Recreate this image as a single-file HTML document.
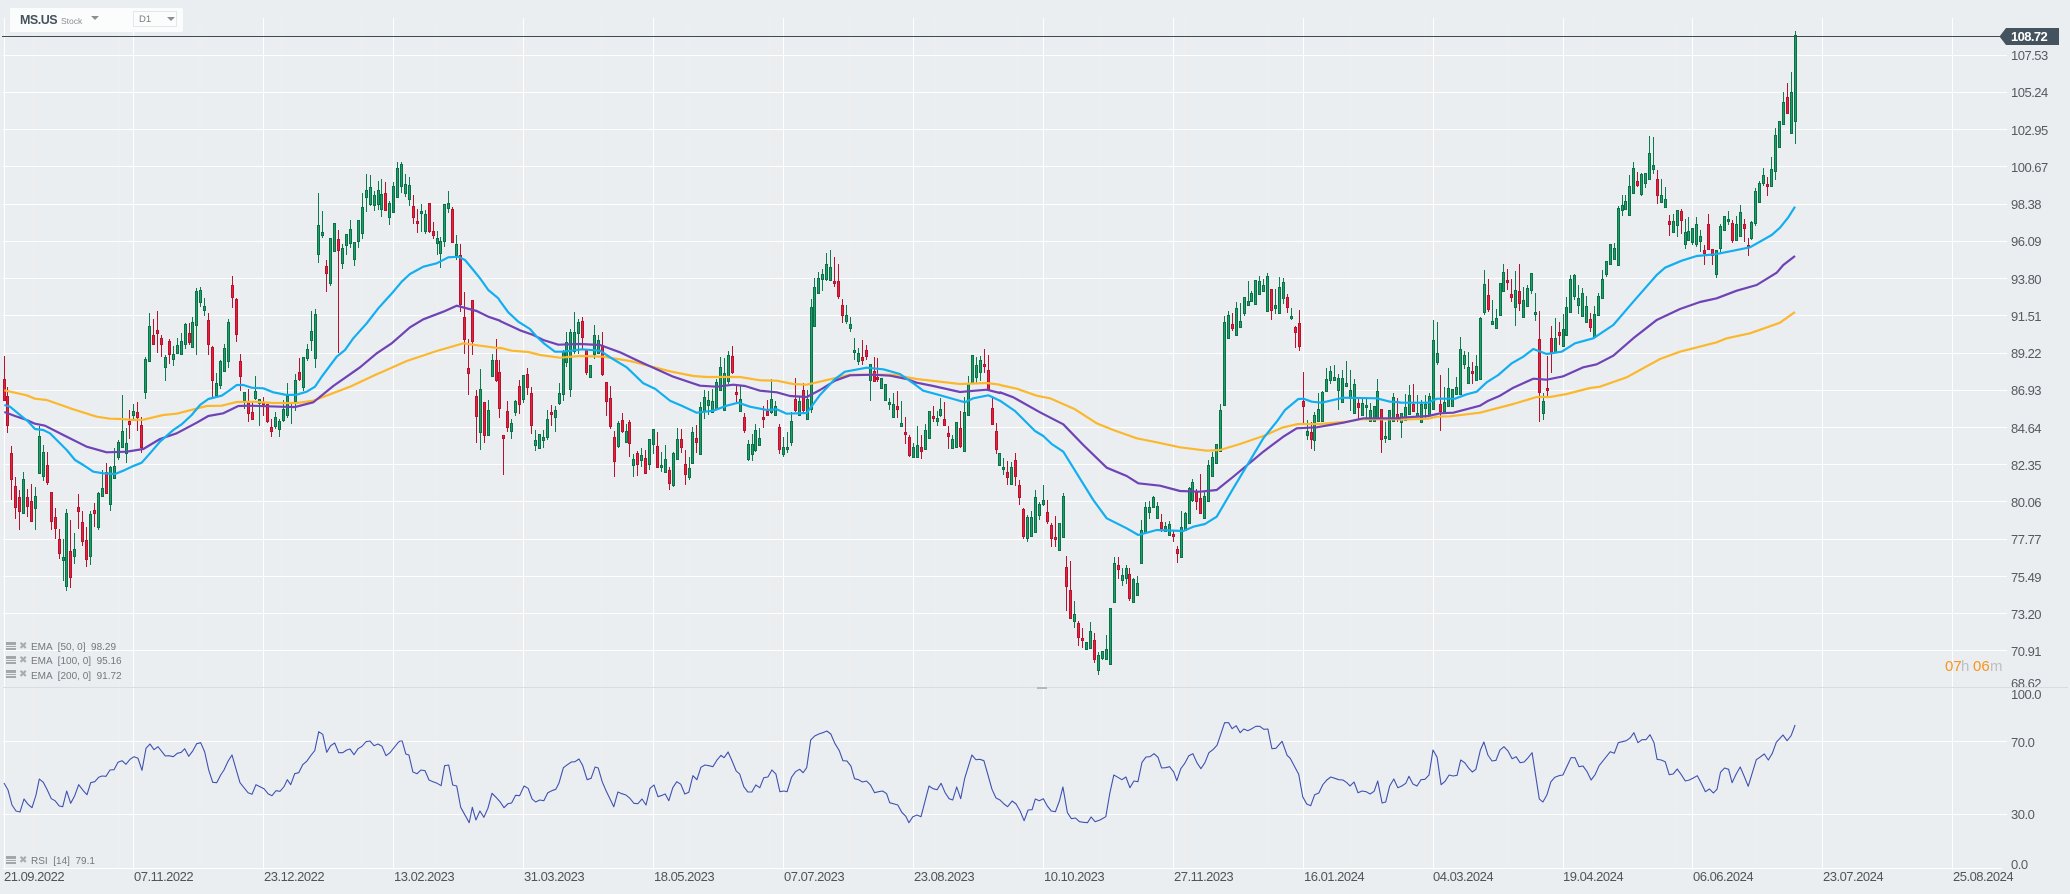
<!DOCTYPE html>
<html>
<head>
<meta charset="utf-8">
<title>MS.US</title>
<style>
html,body{margin:0;padding:0;background:#ebeef1;}
#r{position:relative;width:2070px;height:894px;overflow:hidden;background:#ebeef1;font-family:"Liberation Sans",sans-serif;}
svg{position:absolute;left:0;top:0;}
.p{position:absolute;left:2011px;height:16px;line-height:16px;font-size:13px;letter-spacing:-.5px;color:#555a5f;white-space:pre;}
.d{position:absolute;top:869px;height:16px;line-height:16px;font-size:13px;letter-spacing:-.5px;color:#4f5458;white-space:pre;}
.l{position:absolute;left:31px;height:14px;line-height:14px;font-size:10px;color:#73787c;white-space:pre;}
.x{position:absolute;left:19px;height:14px;line-height:14px;font-size:10px;color:#a9acaf;font-family:"DejaVu Sans",sans-serif;}
.t{position:absolute;top:659px;height:16px;line-height:16px;font-size:15px;}
#h{position:absolute;left:10px;top:8px;width:173px;height:24px;background:#fbfcfc;border-radius:2px;}
#h div{position:absolute;white-space:pre;}
.c{width:0;height:0;border-left:4px solid transparent;border-right:4px solid transparent;border-top:4px solid #8a8f93;}
</style>
</head>
<body>
<div id="r">
<svg width="2070" height="894" viewBox="0 0 2070 894">
<path fill="none" stroke="#f0eeee" stroke-width="1.5" d="M34 18V868M118.500 18V868M200 18V868M282 18V868M362 18V868M437 18V868M520 18V868M602 18V868M688 18V868M770 18V868M850 18V868M935 18V868M1018 18V868M1100 18V868M1185 18V868M1267 18V868M1350 18V868M1425 18V868M1507 18V868M1593 18V868M1675 18V868M1755 18V868"/>
<path fill="none" stroke="#fff" stroke-width="1" d="M3 55.500H2007M3 92.500H2007M3 129.500H2007M3 166.500H2007M3 204.500H2007M3 241.500H2007M3 278.500H2007M3 315.500H2007M3 353.500H2007M3 390.500H2007M3 427.500H2007M3 464.500H2007M3 501.500H2007M3 539.500H2007M3 576.500H2007M3 613.500H2007M3 650.500H2007M3 741.500H2007M3 814.500H2007M3 868.500H2002M4.500 18V870M133.500 18V870M263.500 18V870M393.500 18V870M523.500 18V870M653.500 18V870M783.500 18V870M913.500 18V870M1043.500 18V870M1173.500 18V870M1303.500 18V870M1433.500 18V870M1563.500 18V870M1692.500 18V870M1822.500 18V870M1952.500 18V870"/>
<path fill="none" stroke="#d9dde1" stroke-width="1" d="M3 687.500H2068"/>
<rect x="1037" y="687" width="10" height="2" fill="#b4b8bb"/>
<path id="gw" fill="none" stroke="#0e7a50" stroke-width="1"/>
<path id="rw" fill="none" stroke="#b5132f" stroke-width="1"/>
<path id="gb" fill="none" stroke="#0c7049" stroke-width="3"/>
<path id="gi" fill="none" stroke="#1ba068" stroke-width="1"/>
<path id="rb" fill="none" stroke="#b5132f" stroke-width="3"/>
<path id="ri" fill="none" stroke="#ea2038" stroke-width="1"/>
<path id="e200" fill="none" stroke="#fbb72d" stroke-width="2.200" stroke-linejoin="round"/>
<path id="e100" fill="none" stroke="#6f42b5" stroke-width="2.200" stroke-linejoin="round"/>
<path id="e50" fill="none" stroke="#12aef0" stroke-width="2.200" stroke-linejoin="round"/>
<path id="rsi" fill="none" stroke="#3f51b0" stroke-width="1.100" stroke-linejoin="round"/>
<path fill="none" stroke="#3d4b55" stroke-width="1" d="M2 36.500H2002"/>
<path fill="#44535e" d="M1999.500 36.500L2006 28H2059V45H2006Z"/>
<path fill="#a4a7aa" d="M6 642h10v3H6zM6 646h10v1H6zM6 648h10v2H6zM6 656h10v3H6zM6 660h10v1H6zM6 662h10v2H6zM6 670h10v3H6zM6 674h10v1H6zM6 676h10v2H6zM6 856h10v3H6zM6 860h10v1H6zM6 862h10v2H6z"/>
</svg>

<div id="h">
<div style="left:10px;top:4px;line-height:16px;font-size:12.500px;font-weight:bold;letter-spacing:-.5px;color:#46535e;">MS.US</div>
<div style="left:51px;top:6px;line-height:14px;font-size:8.500px;color:#8b9094;">Stock</div>
<div class="c" style="left:81px;top:8px;"></div>
<div style="left:123px;top:3px;width:42px;height:14px;border:1px solid #e4e7ea;"></div>
<div style="left:129px;top:4px;line-height:15px;font-size:9.500px;color:#777c80;">D1</div>
<div class="c" style="left:157px;top:9px;"></div>
</div>

<div class="p" style="top:29px;left:2011px;color:#fff;font-weight:bold;letter-spacing:-.6px;">108.72</div>
<div class="p" style="top:48px">107.53</div>
<div class="p" style="top:85px">105.24</div>
<div class="p" style="top:123px">102.95</div>
<div class="p" style="top:160px">100.67</div>
<div class="p" style="top:197px">98.38</div>
<div class="p" style="top:234px">96.09</div>
<div class="p" style="top:272px">93.80</div>
<div class="p" style="top:309px">91.51</div>
<div class="p" style="top:346px">89.22</div>
<div class="p" style="top:383px">86.93</div>
<div class="p" style="top:421px">84.64</div>
<div class="p" style="top:458px">82.35</div>
<div class="p" style="top:495px">80.06</div>
<div class="p" style="top:532px">77.77</div>
<div class="p" style="top:570px">75.49</div>
<div class="p" style="top:607px">73.20</div>
<div class="p" style="top:644px">70.91</div>
<div class="p" style="top:676px;height:11px;overflow:hidden;">68.62</div>
<div class="p" style="top:687px">100.0</div>
<div class="p" style="top:735px">70.0</div>
<div class="p" style="top:807px">30.0</div>
<div class="p" style="top:857px">0.0</div>

<div class="d" style="left:4px">21.09.2022</div>
<div class="d" style="left:134px">07.11.2022</div>
<div class="d" style="left:264px">23.12.2022</div>
<div class="d" style="left:394px">13.02.2023</div>
<div class="d" style="left:524px">31.03.2023</div>
<div class="d" style="left:654px">18.05.2023</div>
<div class="d" style="left:784px">07.07.2023</div>
<div class="d" style="left:914px">23.08.2023</div>
<div class="d" style="left:1044px">10.10.2023</div>
<div class="d" style="left:1174px">27.11.2023</div>
<div class="d" style="left:1304px">16.01.2024</div>
<div class="d" style="left:1433px">04.03.2024</div>
<div class="d" style="left:1563px">19.04.2024</div>
<div class="d" style="left:1693px">06.06.2024</div>
<div class="d" style="left:1823px">23.07.2024</div>
<div class="d" style="left:1953px">25.08.2024</div>

<div class="x" style="top:640px">✖</div><div class="l" style="top:641px">EMA  [50, 0]  98.29</div>
<div class="x" style="top:654px">✖</div><div class="l" style="top:655px">EMA  [100, 0]  95.16</div>
<div class="x" style="top:668px">✖</div><div class="l" style="top:670px">EMA  [200, 0]  91.72</div>
<div class="x" style="top:854px">✖</div><div class="l" style="top:855px">RSI  [14]  79.1</div>

<div class="t" style="left:1945px;color:#f7941d">07</div>
<div class="t" style="left:1961px;color:#bdbfc1">h</div>
<div class="t" style="left:1973px;color:#f7941d">06</div>
<div class="t" style="left:1990px;color:#bdbfc1">m</div>
</div>

<script>
var P={gw:'',rw:'',gb:'',gi:'',rb:'',ri:''};
function C(ox,oy,s){
 s.trim().split(/\s*,\s*/).forEach(function(e){
  if(!e)return;
  var c=e[0],a=e.slice(1).trim().split(/\s+/).map(Number);
  var x=Math.floor(ox+a[0]/3)+.5;
  var h=Math.round(oy+a[1]/3),t=Math.round(oy+a[2]/3),b=Math.round(oy+a[3]/3),l=Math.round(oy+a[4]/3);
  if(b-t<2)b=t+2;
  P[c+'w']+='M'+x+' '+h+'V'+l;
  P[c+'b']+='M'+x+' '+t+'V'+b;
  P[c+'i']+='M'+x+' '+(t+1)+'V'+(b-1);
 });
}
C(0,280,`r13 228 297 362 362,r22 322 348 437 459,r34 498 519 599 660,r46 591 618 684 717,r58 630 652 695 750,g70 576 597 701 701,r82 628 652 681 710,r94 612 663 725 725,g106 621 648 686 750,g118 438 468 581 581,g130 495 516 590 603,r142 516 555 609 615,r154 636 636 725 750,r166 684 711 746 777,r178 747 777 822 837,g190 777 831 843 903,g199 687 699 921 933,r211 720 813 893 924,g223 759 807 831 852,r235 642 681 696 747,r247 693 726 786 798,r259 741 780 840 861,g271 693 702 831 855,r283 669 690 702 741,g295 636 639 744 750,g307 570 624 651 651,r319 549 576 642 642,g331 558 561 675 693,g343 504 558 597 597,g355 480 486 534 540,g367 345 453 504 504,g379 444 489 522 549,r388 390 423 435 477,g400 372 393 408 420,r412 366 396 414 453,r424 411 435 504 519,g436 231 237 339 357,g448 99 138 246 246,r460 117 165 195 195,r472 93 150 162 219,r484 165 174 195 231,g496 225 231 264 303,r508 177 183 225 252,g520 198 222 240 258,g532 174 195 222 222,g544 159 183 225 225,g556 129 132 195 207,r568 129 159 189 195,g577 111 126 204 204,g589 24 33 138 225,g601 21 30 69 81,g613 54 78 93 108,r625 99 120 195 225,r637 198 201 303 351,g649 279 309 348 348,g661 240 243 318 327,g673 192 204 276 276,g685 117 126 246 264,r697 -12 15 54 84,r709 54 57 165 186,r721 222 243 291 333,g733 336 336 363 387,r745 327 363 402 426,r757 366 396 420 420,g766 288 333 357 360,g778 357 357 372 438,r790 351 366 375 408,r802 372 372 426 429,r814 417 441 456 471,g826 396 411 441 447,g838 417 423 450 471,g850 360 387 423 426,g862 309 348 408 414,g874 372 378 381 432,g886 282 300 366 393,r898 234 276 300 303,g910 231 231 324 333,g922 192 207 237 243,g934 93 153 183 213,g946 87 102 237 264`);
C(0,280,`r1405 177 264 282 345,r1417 60 60 186 225,r1429 330 348 411 489,g1441 267 327 459 510,r1453 366 366 468 489,g1465 360 390 468 468,g1477 222 240 291 291,r1489 177 240 303 306`);
C(290,150,`g85 129 225 315 339,g97 183 246 258 264,r109 330 348 372 426,g121 264 264 402 408,g133 219 219 306 306,r145 240 267 303 609,g157 282 294 342 357,g169 252 252 288 315,g181 210 237 282 294,g193 276 276 330 348,g205 210 210 276 294,g217 129 171 252 267,g229 72 120 144 186,g241 75 111 165 168,g253 123 135 168 183,g265 93 120 165 180,g274 87 132 180 201,r286 96 129 183 183,g298 153 159 204 225,g310 96 108 189 189,g322 36 54 144 144,g334 36 42 111 129,g346 72 102 132 141,g358 81 105 150 168,r370 135 168 204 222,r382 177 213 222 249,g394 162 183 192 246,g406 180 192 246 252,r418 159 159 246 249,r430 216 243 258 267,g442 243 264 282 315,g451 261 273 312 354,g463 162 162 276 291,g475 123 159 177 189,r487 171 177 279 279,g499 255 282 318 330,r511 282 315 465 486,r523 426 501 570 612`);
C(500,150,`r-2 630 666 777 803,r10 855 855 867 975,r22 753 783 834 846,g34 807 819 846 867,g46 750 753 789 798,r58 690 708 765 792,g70 675 675 750 759,r82 654 672 714 735,r94 711 729 828 852,g106 840 870 888 903,g118 852 852 897 897,g130 840 861 873 894,g142 780 807 864 870,r154 765 786 795 828,g166 768 780 804 846,g178 699 729 762 765,g190 600 606 735 753,g199 546 576 639 651,g211 537 546 720 741,g223 486 546 606 612,g235 507 516 552 612,r247 501 513 564 600,r259 600 600 669 675,g271 645 645 684 684,g283 525 555 615 627,g295 555 570 612 612,r307 546 585 675 678,r319 696 696 756 798,r331 708 744 831 837,r343 843 861 936 981,g355 813 819 891 894,r367 789 810 846 849,g379 822 843 879 879,r388 810 816 882 921,g400 912 927 948 981,r412 903 909 945 978,g424 894 915 933 951,r436 900 924 972 972,g448 867 867 945 960,g460 837 837 885 912,r472 846 888 954 954,g484 906 945 954 966,g496 885 927 969 969,r508 951 960 1002 1020,g520 906 909 1008 1011,g532 834 867 930 930,r544 837 867 894 909,r556 900 942 975 1005,g568 921 954 984 990,g577 831 846 942 942,r589 825 864 879 909,g601 756 771 916 916,g613 720 741 786 806,g625 723 750 768 795,g637 717 753 789 789,g649 687 696 780 780,g661 621 651 723 723,g673 624 669 783 783,g685 603 615 696 702,r697 588 618 670 672,r709 705 726 735 756,g721 708 747 786 786,r733 789 801 843 849,g745 870 882 930 933,g757 852 882 915 933,g766 822 840 903 906,g778 834 864 888 888,r790 768 801 810 834,r802 750 783 798 798,g814 687 747 789 792,g826 753 768 798 798,r838 822 831 900 912,g850 861 891 915 921,g862 846 891 900 909,g874 786 813 879 888,r886 684 747 783 786,g898 741 753 798 798,r910 699 720 783 786,g922 720 747 810 810,g934 447 471 780 790,g943 384 411 531 531,g955 366 384 432 432,g967 357 372 390 423,g979 309 342 390 393,g991 300 351 393 393,r1003 321 393 402 411,r1015 342 393 441 447,r1027 447 465 498 519,g1039 465 495 516 522,g1051 501 522 537 546,g1063 564 600 609 630,g1075 594 609 636 645,r1087 570 621 633 645,r1099 585 600 621 630,g1111 642 642 693 753,r1123 621 663 696 696,r1132 624 681 690 696,g1144 684 684 717 717,g1156 702 702 753 753,g1168 744 756 765 780,g1180 729 762 804 804,r1192 723 768 780 804,g1204 753 819 831 831,r1216 801 846 855 882,r1228 855 861 918 921,g1240 879 891 924 924,g1252 828 885 924 924,r1264 855 891 906 927,g1276 822 840 900 900,g1288 783 783 867 867,r1300 768 798 807 816,g1312 783 804 816 828,g1321 744 777 798 801,r1333 756 807 828 828,r1345 828 849 861 897,g1357 855 867 897 897,g1369 816 816 894 894,r1381 783 834 892 894,g1393 741 786 906 906,g1405 678 702 798 798,g1417 615 615 702 702,g1429 621 645 684 699,g1441 618 630 669 693,r1453 597 642 651 669,r1465 615 660 720 720,r1477 744 774 825 825,r1489 819 843 900 912,g1498 909 909 948 948`);
C(1000,330,`g10 384 411 420 435,r22 393 426 444 465,g34 396 411 465 465,r46 369 390 441 468,r58 450 465 504 525,r70 534 537 621 627,g82 555 561 627 636,g94 543 561 621 621,g106 480 501 609 609,g118 516 522 558 570,g130 465 510 525 528,r142 510 546 576 582,r154 579 585 627 651,r166 558 621 630 651,g178 579 579 663 663,g190 489 498 624 624,r199 678 711 771 843,r211 693 780 867 867,g223 813 852 876 894,r235 873 879 924 948,r247 894 924 933 954,g259 936 936 960 960,g271 876 903 957 957,r283 909 930 990 999,g295 966 975 1023 1035,g307 963 963 987 990,g319 915 957 990 990,g331 834 834 1005 1005,g343 681 699 819 819,r355 681 705 720 747,g367 714 735 753 768,g379 705 714 747 762,r388 714 732 807 813,g400 744 747 819 819,g412 738 759 798 798,g424 570 600 702 702,g436 516 531 609 609,g448 513 531 549 567,g460 498 501 534 534,g472 516 528 567 567,r484 552 576 597 606,g496 576 588 606 606,g508 573 582 618 618,r520 600 612 621 636,r532 648 657 672 699,g544 543 591 684 684,g556 546 549 603 603,g568 471 474 582 582,g577 447 456 513 516,r589 477 486 516 540,r601 432 504 552 552,g613 486 498 567 567,g625 390 405 516 516,g637 366 381 441 441,g649 342 342 402 402,g661 222 240 366 366,g673 -42 -24 228 228,r910 126 213 231 279,g922 270 303 318 330,r934 276 306 330 357,g943 246 255 333 363,g955 189 237 276 276,g967 183 186 276 276,g979 114 147 186 186,g991 108 123 153 162,g1003 105 141 153 153,g1015 132 144 183 240,g1027 120 144 219 219,g1039 93 159 171 171,g1051 120 180 207 243,g1063 147 162 252 252,r1075 204 219 234 267,g1087 201 219 258 258,g1099 207 225 234 264,g1111 219 240 276 276,g1123 228 228 276 276,g1132 147 183 267 267,r1144 237 237 330 369,g1156 276 318 327 339,g1168 240 240 330 330,g1180 189 201 276 276,r1192 204 252 267 276`);
C(1200,260,`g85 153 165 237 237,r97 159 192 207 213,g109 126 144 228 228,g121 129 183 204 204,g133 111 111 162 168,g145 63 123 138 138,g154 93 99 126 126,g166 60 60 135 135,g178 48 63 105 105,g190 57 75 96 96,g202 39 48 156 156,r214 87 87 153 180,g226 87 135 147 162,g238 51 81 162 162,g250 54 66 117 132,r262 102 111 144 159,g274 144 168 177 180,r286 198 201 219 264,r298 150 189 261 273`);
C(1400,130,`g4 849 849 879 924,g16 792 831 873 873,g28 765 795 855 855,r40 762 822 846 846,g52 795 849 861 861,g64 810 822 879 879,g76 795 822 837 864,g88 789 798 858 858,g100 570 630 840 840,g112 576 669 699 705,r121 735 822 846 903,g133 771 816 846 846,g145 714 774 831 831,g157 777 777 831 831,g169 741 771 795 795,g181 621 657 795 795,g193 663 675 705 717,g205 666 711 762 762,r217 696 723 732 762,g229 675 708 753 753,g241 561 564 750 750,g253 420 462 549 555,r265 447 495 540 546,g277 510 573 585 585,g289 537 564 597 597,g301 459 459 558 558,g310 402 426 486 486,r322 417 450 459 480,r334 447 492 504 516,g346 423 480 534 588,r358 402 483 522 543,g370 471 510 564 564,g382 465 474 531 531,g394 429 429 483 492,g406 489 546 555 573,r418 543 627 789 876,g430 789 813 852 870,r442 678 774 783 798,r454 588 624 669 729,g466 564 624 669 669,r478 576 606 618 645,g490 552 597 651 651,g499 501 531 618 618,g511 435 447 549 549,g523 432 435 501 510,g535 465 504 528 552,g547 474 489 561 561,g559 498 528 579 579,r571 549 567 594 606,g583 528 552 624 624,g595 489 498 558 558,g607 420 447 507 507,g619 393 393 435 441,g631 342 342 405 405,g643 339 354 390 390,g655 228 234 408 408,g667 195 225 243 258,g676 195 213 240 240,g688 135 168 258 258,g700 96 114 192 192,r712 126 153 168 171,g724 129 132 195 198,g736 129 129 162 174,g748 18 69 150 150,g760 21 105 120 132,r772 120 147 198 222,g784 147 195 219 219,g796 171 207 234 234,r808 255 273 285 318,g820 252 273 309 309,g832 240 240 288 321,r844 237 243 273 312,g856 267 306 345 357,g865 261 303 333 333,g877 294 294 339 345,g889 261 282 345 351,g901 300 318 336 366,r913 345 360 372 405,r925 252 282 360 360,r937 357 357 378 405,g949 360 360 435 444,g961 282 288 357 366,g973 258 258 303 303,g985 243 267 276 285,r997 270 279 333 339,g1009 258 282 333 333,g1021 225 246 321 321,r1033 267 282 297 336,r1045 324 345 354 378,g1054 273 276 327 330,g1066 174 183 282 288,g1078 153 159 219 219,g1090 114 135 162 168,r1102 141 162 171 198,g1114 81 117 171 171,g1126 -6 15 126 150`);
C(1700,0,`g238 363 363 443 443,g250 276 306 375 375,r262 249 291 342 342,g274 216 276 402 402,g286 93 105 366 432`);
for(var k in P)document.getElementById(k).setAttribute('d',P[k]);
function L(id,segs){
 var d='',f=1;
 segs.forEach(function(s){
  var n=s[3].trim().split(/[\s,]+/).map(Number);
  for(var i=0;i<n.length;i+=2){
   d+=(f?'M':'L')+(s[0]+n[i]/s[2]).toFixed(1)+' '+(s[1]+n[i+1]/3).toFixed(1);f=0;
  }
 });
 document.getElementById(id).setAttribute('d',d);
}
L('e50',[[0,280,3,'13 375,30 380,60 405,85 425,105 447,130 450,150 460,170 480,200 510,225 540,250 555,280 575,310 580,345 582,370 572,395 560,425 548,450 520,480 485,520 450,545 433,575 405,600 375,625 357,665 347,690 330,710 315,730 315,755 323,790 325,820 337,860 345,890 344,920 335,945 320,965 290,1010 230,1035 210,1060 175,1100 130,1135 85'],
[290,150,3,'310 425,335 395,360 372,400 350,440 340,475 322,505 320,525 330,550 360,570 385,595 420,625 445'],
[500,150,3,'0 453,25 487,55 515,90 537,110 560,135 583,165 605,190 605,245 598,300 602,335 625,380 652,430 700,465 716,510 752,545 767,590 788,640 782,680 767,715 758,750 770,800 780,830 778,860 791,920 789,960 735,1005 687,1035 665,1100 653,1150 658,1200 672,1240 700,1270 722,1310 733,1360 747,1395 757,1420 745,1465 736,1500 752'],
[1000,330,3,'0 212,45 243,105 303,130 318,155 342,190 365,230 430,280 510,320 565,380 595,415 615,470 600,550 603,580 590,615 582,650 560,700 475,745 400,790 325,830 275,855 240,895 207,910 206,935 215,965 218,1030 203,1130 205,1170 215,1200 217'],
[1400,130,3,'0 818,85 818,110 806,165 806,200 793,230 785,260 757,295 735,335 700,370 680,400 657,440 672,485 665,525 640,580 625,640 585,700 515,770 435,795 413,845 392,890 378,945 373,1000 362,1050 352,1115 315,1140 293,1165 262,1185 230']]);
L('e100',[[0,280,3,'13 396,45 408,80 420,105 431,135 437,190 465,260 500,320 517,380 515,430 507,480 477,530 460,590 428,625 408,670 400,715 378,750 377,840 380,885 381,940 367,1000 318,1080 262,1130 220,1175 190,1230 142,1270 118,1330 95,1370 77,1430 93,1465 110,1500 122'],
[500,150,3,'0 513,60 541,100 555,130 570,175 584,240 582,300 585,360 607,430 640,520 680,600 707,650 710,700 704,735 708,780 722,830 727,870 738,920 741,960 720,1005 692,1050 676,1120 674,1170 677,1220 687,1250 698,1300 708,1380 726,1460 719,1500 729'],
[1000,330,3,'0 187,40 202,120 247,190 283,250 345,320 413,380 438,415 460,480 467,540 483,600 485,650 480,700 440,790 365,850 320,890 295,950 292,1030 278,1090 265,1200 265'],
[1400,130,3,'0 863,85 858,120 850,160 848,240 827,265 812,300 797,340 773,400 746,440 749,490 739,550 712,590 703,640 677,700 625,770 570,840 537,900 516,950 505,1010 482,1070 465,1130 428,1150 405,1185 378']]);
L('e200',[[0,280,3,'13 331,80 346,105 356,140 360,220 388,290 410,330 416,365 417,400 420,430 419,490 405,530 401,620 378,665 377,710 366,760 365,820 369,890 369,940 362,1050 320,1130 283,1220 243,1310 213,1390 190,1440 197,1500 205'],
[500,150,3,'0 593,35 602,85 606,120 615,180 623,240 618,310 620,390 633,510 664,580 678,620 681,720 681,780 691,830 692,880 702,920 704,1050 674,1180 674,1250 687,1380 702,1460 699,1500 704'],
[1000,330,3,'0 165,50 176,110 197,150 205,225 238,290 280,340 300,410 325,470 337,540 352,620 362,660 360,720 342,790 318,850 292,895 282,960 282,1040 275,1080 268,1200 268'],
[1400,130,3,'0 869,85 866,110 860,150 859,240 848,340 822,410 801,450 801,500 792,570 774,600 770,640 756,680 742,780 687,840 665,950 637,980 625,1050 610,1140 578,1185 546']]);
L('rsi',[[0,620,3,'12 489,24 510,36 555,48 573,60 576,72 537,84 553,96 563,108 525,118 477,130 487,142 510,154 536,165 542,178 558,188 560,200 513,212 550,224 527,236 494,250 512,261 524,272 488,284 485,296 472,306 468,318 469,330 450,342 449,354 427,366 422,378 433,390 418,402 410,414 415,426 451,438 385,450 372,462 389,474 380,496 408,506 407,520 410,532 400,544 397,554 386,566 409,578 393,590 371,602 368,614 396,626 450,638 487,650 488,662 465,672 450,684 424,696 405,708 447,720 488,732 503,744 518,756 523,768 494,780 500,792 506,804 521,816 527,828 512,840 514,852 500,862 479,872 494,884 461,896 458,908 434,920 424,932 407,944 392,956 335,968 343,980 397,992 377,1004 369,1016 398,1028 398,1040 390,1050 387,1062 404,1074 386,1086 379,1098 365,1110 363,1122 377,1134 372,1146 379,1158 407,1170 398,1182 383,1194 368'],
[400,700,2.24,'0 123,5 123,13 162,20 165,29 216,38 221,47 210,56 212,65 240,74 245,83 250,92 257,100 197,109 195,118 255,127 258,136 322,155 368,162 322,170 360,179 333,188 352,197 325,206 280,215 292,224 305,233 323,242 311,250 309,259 286,268 287,278 258,287 265,296 297,304 306,313 300,322 302,331 278,340 272,349 268,356 250,366 203,375 194,384 186,392 185,401 177,409 196,419 239,428 235,437 201,444 204,453 245,462 274,479 320,488 276,497 281,506 285,515 295,524 310,533 311,542 297,551 315,560 265,569 255,578 290,587 286,594 282,602 302,611 263,620 245,629 253,638 282,647 277,656 227,665 239,674 202,683 195,692 197,701 200,710 180,719 166,726 173,735 156,744 183,753 213,761 222,770 260,779 276,788 276,797 255,806 263,815 233,824 231,833 210,842 222,851 275,860 273,867 275,877 232,886 215,895 208,903 218,911 203,920 120,929 108,938 102,947 98,956 93,965 102,974 130,984 152,992 182,1001 183,1010 198,1018 236,1027 239,1036 246,1045 243,1054 255,1063 278,1072 275,1081 273,1090 281,1097 308,1115 315,1124 337,1133 349,1140 368,1149 350,1158 345,1167 350,1185 258,1194 266,1203 269,1212 250,1221 278,1230 296,1238 300,1247 261,1256 296,1265 235,1281 165,1290 179,1299 178,1308 182,1316 220,1326 268,1335 294,1344 300,1353 312,1361 320,1371 303,1380 312,1389 333,1398 362,1407 330,1416 329,1423 297,1432 302,1441 296,1450 318,1459 333,1468 335,1477 303,1485 261,1495 338,1504 356,1513 354,1522 365,1531 367,1540 368,1548 351,1557 365,1568 360'],
[1100,700,2.24,'13 350,22 280,31 225,40 232,49 239,58 231,67 263,76 243,85 245,94 187,103 171,112 170,121 161,130 172,138 204,147 203,156 200,165 216,172 242,181 206,190 190,199 167,208 161,217 188,226 206,235 188,244 158,253 149,262 136,270 105,279 68,288 68,296 86,305 77,314 98,322 87,331 92,340 86,349 79,358 79,367 88,376 87,385 146,394 145,408 124,419 166,426 175,445 223,454 290,463 312,472 317,481 284,490 279,499 254,508 240,517 231,526 235,535 239,544 240,553 248,560 258,569 246,578 278,587 273,596 275,605 282,614 274,622 243,632 309,640 306,649 258,658 237,667 263,676 258,685 250,692 229,701 252,710 258,719 239,728 238,737 225,746 150,755 172,764 254,773 244,782 225,791 228,800 226,808 180,817 188,826 205,834 216,842 208,852 150,860 126,869 165,878 183,887 181,896 150,905 140,914 153,923 176,932 170,941 188,950 186,959 173,968 158,984 297,992 306,1001 285,1010 245,1019 232,1028 227,1037 225,1055 173,1064 173,1073 200,1082 198,1091 215,1100 240,1109 224,1118 197,1127 182,1143 155,1152 160,1161 128,1170 125,1179 122,1188 113,1196 98,1205 128,1214 119,1223 119,1232 104,1241 128,1248 178,1257 180,1266 185,1275 224,1284 222,1293 207,1302 224,1311 243,1320 240,1329 234,1338 227,1347 250,1356 275,1365 267,1374 279,1382 268,1390 217,1399 204,1408 208,1416 248,1425 222,1434 201,1443 229,1452 259,1470 179,1478 172,1488 162,1497 180,1506 160,1515 127,1530 105,1539 122,1548 107,1557 75']]);
</script>
</body>
</html>
